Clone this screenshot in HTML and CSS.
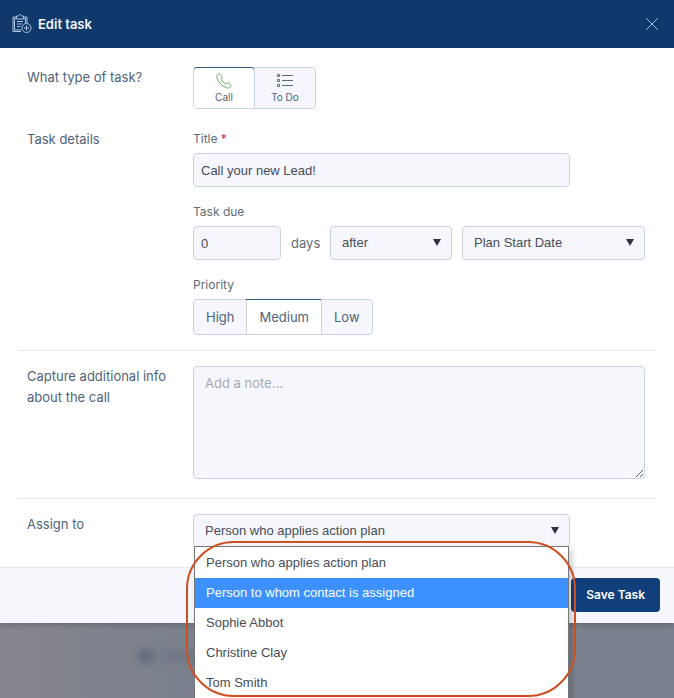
FILE: index.html
```html
<!DOCTYPE html>
<html lang="en">
<head>
<meta charset="utf-8">
<meta name="viewport" content="width=device-width, initial-scale=1">
<title>Edit task</title>
<link rel="stylesheet" href="styles.css">
</head>
<body>
<div class="backdrop" aria-hidden="true"><span class="blur blur-icon"></span><span class="blur blur-text"></span></div>
<form class="modal">
  <header class="modal-header">
    <svg class="header-icon" viewBox="0 0 20 20" width="20" height="20" aria-hidden="true">
      <path d="M4 3H1v14.500h8M4 4.500H2.500V16H9M11.500 3h3.500v6M11.500 4.500h2V9M4.500 2h2c0-2 3-2 3 0h2v3h-7zM5 7.500h6M5 10h5M5 12.500h3.500"/>
      <circle cx="14.500" cy="14" r="4.500"/>
      <path d="M14.500 11.500v5M12 14h5"/>
    </svg>
    <h1 class="modal-title">Edit task</h1>
    <button class="close" type="button" aria-label="Close">
      <svg viewBox="0 0 14 14" width="14" height="14" aria-hidden="true"><path d="M1 1l12 12M13 1L1 13"/></svg>
    </button>
  </header>
  <main class="modal-body">
    <section class="row">
      <h2 class="row-label">What type of task?</h2>
      <div class="segments types" role="radiogroup" aria-label="What type of task?">
        <label class="segment type"><input type="radio" name="type" checked>
          <svg class="phone" viewBox="0 0 16 16" width="16" height="16" aria-hidden="true"><path d="M1.600 1.700C.6 2.600.5 3.800 1 5.200c1.600 4.300 5 7.800 9.300 9.500 1.800.7 3.200.4 4.300-.9.600-.8.500-1.600-.2-2.200l-2-1.500c-.7-.5-1.500-.4-2.100.2l-.7.8C7.700 9.900 6.100 8.300 5 6.400l.7-.7c.6-.6.7-1.300.3-2L4.400 1.600c-.7-.9-1.800-.9-2.800.1z"/></svg>
          <span>Call</span></label>
        <label class="segment type"><input type="radio" name="type">
          <svg class="list" viewBox="0 0 16 16" width="16" height="16" aria-hidden="true"><path d="M.5 1.500h2v2h-2zM.5 6.500h2v2h-2zM.5 11.500h2v2h-2zM5 2.500h11M5 7.500h11M5 12.500h11"/></svg>
          <span>To Do</span></label>
      </div>
    </section>
    <section class="row">
      <h2 class="row-label">Task details</h2>
      <div class="fields">
        <div class="field">
          <label class="field-label" for="title">Title <span class="required">*</span></label>
          <input class="control wide" id="title" type="text" value="Call your new Lead!">
        </div>
        <div class="field">
          <label class="field-label" for="days">Task due</label>
          <div class="due">
            <input class="control" id="days" type="text" value="0">
            <label class="days" for="days">days</label>
            <div class="select"><select class="control" aria-label="When"><option>after</option><option>before</option></select></div>
            <div class="select"><select class="control" aria-label="Reference date"><option>Plan Start Date</option></select></div>
          </div>
        </div>
        <div class="field">
          <span class="field-label" id="priority">Priority</span>
          <div class="segments" role="radiogroup" aria-labelledby="priority">
            <label class="segment level"><input type="radio" name="priority">High</label>
            <label class="segment level"><input type="radio" name="priority" checked>Medium</label>
            <label class="segment level"><input type="radio" name="priority">Low</label>
          </div>
        </div>
      </div>
    </section>
    <section class="row divided">
      <label class="row-label" for="note">Capture additional info about the call</label>
      <textarea class="control note" id="note" placeholder="Add a note..."></textarea>
    </section>
    <section class="row divided">
      <label class="row-label" for="assignee">Assign to</label>
      <div class="select wide assignee">
        <select class="control" id="assignee"><option>Person who applies action plan</option></select>
        <ul class="menu" role="listbox" aria-label="Assign to">
          <li class="option" role="option">Person who applies action plan</li>
          <li class="option active" role="option" aria-selected="true">Person to whom contact is assigned</li>
          <li class="option" role="option">Sophie Abbot</li>
          <li class="option" role="option">Christine Clay</li>
          <li class="option" role="option">Tom Smith</li>
        </ul>
        <div class="highlight"></div>
      </div>
    </section>
  </main>
  <footer class="modal-footer"><button class="save" type="submit">Save Task</button></footer>
</form>
</body>
</html>
```
FILE: styles.css
```css
* { box-sizing: border-box; }

body {
  margin: 0;
  min-height: 100vh;
  overflow: hidden;
  position: relative;
  background: #7d828d;
  color: #4f6378;
  font: 13px/20px Inter, sans-serif;
}

h1, h2 { margin: 0; font: inherit; }
svg { fill: none; stroke: currentColor; }
button { cursor: pointer; font: inherit; }

.backdrop {
  position: absolute;
  inset: 0;
  background: linear-gradient(90deg, #85858e, #7b828d 30%);
}
.blur {
  position: absolute;
  top: 650px;
  height: 12px;
  background: #5c6475;
  filter: blur(5px);
}
.blur-icon { left: 139px; width: 14px; }
.blur-text { left: 162px; width: 50px; opacity: .4; }

.modal {
  position: relative;
  background: #fff;
  box-shadow: 0 2px 6px #0003;
}

.modal-header {
  display: flex;
  align-items: center;
  gap: 6px;
  height: 48px;
  padding: 0 14px 0 12px;
  background: #10386b;
  color: #f1f6ff;
}
.header-icon { color: #a9c4e4; }
.modal-title { flex: 1; font-weight: 600; }
.close {
  display: flex;
  padding: 1px;
  border: 0;
  background: none;
  color: #9db9dc;
}

.modal-body { padding: 19px 18px 19px; }
.row {
  display: grid;
  grid-template-columns: 166px minmax(0, 1fr);
  padding: 0 11px 0 9px;
}
.row + .row { margin-top: 20px; }
.row + .divided {
  margin-top: 15px;
  padding-top: 15px;
  border-top: 1px solid #e3e6ea;
}
.divided + .divided { margin-top: 19px; }
.row-label { font-size: 13px; line-height: 21px; }
.fields { display: grid; gap: 15px; }
.field-label { display: block; margin-bottom: 4px; font-size: 12px; color: #626b76; }
.required { color: #df2448; }

.control {
  display: block;
  width: 100%;
  height: 34px;
  margin: 0;
  padding: 0 7px;
  border: 1px solid #cbd3df;
  border-radius: 4px;
  background: #f5f7fc;
  color: #474d57;
  font: 13px/20px "Liberation Sans", Arial, sans-serif;
  outline: 0;
}
.wide { width: 83.333%; }

.select { position: relative; }
.select select { appearance: none; padding: 0 28px 0 11px; }
.select::after {
  content: "";
  position: absolute;
  top: 13px;
  right: 11px;
  border: solid transparent;
  border-width: 7px 4px 0;
  border-top-color: #30333b;
  pointer-events: none;
}

.due {
  display: grid;
  grid-template-columns: 88fr 29px 122fr 183fr;
  align-items: center;
  column-gap: 10px;
}
.days { color: #626b76; }

.segments {
  display: flex;
  width: max-content;
  border: 1px solid #cbd3df;
  border-radius: 4px;
  background: #f5f7fc;
}
.segment {
  position: relative;
  display: flex;
  align-items: center;
  border-radius: 3px;
  cursor: pointer;
}
.segment + .segment { border-left: 1px solid #cbd3df; border-radius: 0 3px 3px 0; }
.segment + .segment:not(:last-child) { border-radius: 0; }
.segment input { position: absolute; opacity: 0; margin: 0; }
.segment:has(:checked) { background: #fff; box-shadow: 0 -1px #345b80; }
.type {
  flex-direction: column;
  justify-content: center;
  gap: 1px;
  width: 60px;
  height: 40px;
  padding-top: 1px;
  font-size: 10px;
  line-height: 14px;
}
.type + .type { width: 61px; }
.types { height: 42px; }
.phone { color: #70a46b; }
.list { color: #5b697a; }
.level { height: 34px; padding: 0 12px; }

.note { height: 113px; padding: 6px 11px; font-family: Inter, sans-serif; resize: vertical; }
.note::placeholder { color: #a5abb4; }

.assignee { z-index: 1; }
.menu {
  position: absolute;
  top: 32px;
  left: 1px;
  right: 1px;
  margin: 0;
  padding: 1px 0 0;
  border: 1px solid #74777c;
  background: #fff;
  box-shadow: 3px 3px 6px #0003;
  list-style: none;
}
.option {
  height: 30px;
  padding: 0 11px;
  color: #474d57;
  font: 13px/30px "Liberation Sans", Arial, sans-serif;
}
.option.active { background: #3d90ff; color: #fff; }
.option:last-child { height: 60px; }
.highlight {
  position: absolute;
  top: 27px;
  left: -7px;
  right: -6px;
  height: 156px;
  border: 2px solid #ce4e22;
  border-radius: 48px;
  pointer-events: none;
}

.modal-footer {
  display: flex;
  justify-content: flex-end;
  padding: 10px 14px 11px;
  border-top: 1px solid #e5e8ed;
  background: #f5f7fc;
}
.save {
  height: 34px;
  padding: 0 15px;
  border: 0;
  border-radius: 4px;
  background: #103f7c;
  color: #fff;
  font-size: 12px;
  font-weight: 600;
}
```
